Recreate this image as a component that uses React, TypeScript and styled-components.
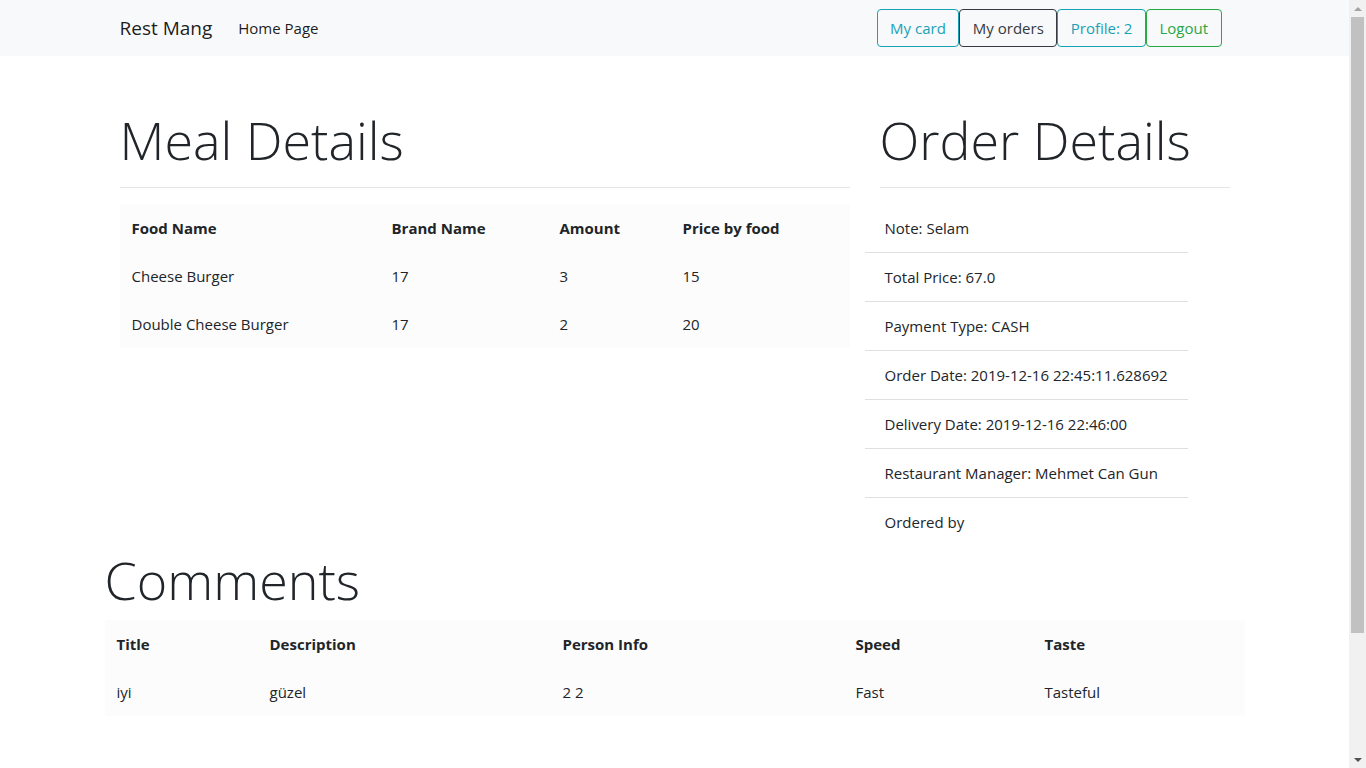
import styled, { createGlobalStyle } from 'styled-components';

const GlobalStyle = createGlobalStyle`
  body {
    margin: 0;
    font-family: "Open Sans", "Noto Sans", "Liberation Sans", sans-serif;
    font-size: 15px;
    line-height: 24px;
    color: #212529;
    background: #fff;
  }
  * {
    box-sizing: border-box;
  }
`;

const Viewport = styled.div`
  display: flex;
  align-items: flex-start;
`;
const Page = styled.div`
  width: 1349px;
  flex: 0 0 1349px;
`;

// the browser's own scrollbar, drawn as in the screenshot
const ScrollBar = styled.div`
  position: sticky;
  top: 0;
  flex: 0 0 17px;
  height: 768px;
  background: #f1f1f1;
  display: flex;
  flex-direction: column;
  align-items: center;
`;
const ScrollArrow = styled.div<{ $down?: boolean }>`
  height: 17px;
  width: 17px;
  display: flex;
  align-items: center;
  justify-content: center;
  &::before {
    content: '';
    border-left: 4px solid transparent;
    border-right: 4px solid transparent;
    ${(p) => (p.$down ? 'border-top: 4px solid #505050;' : 'border-bottom: 4px solid #a3a3a3;')}
  }
`;
const ScrollThumb = styled.div`
  width: 13px;
  height: 616px;
  background: #c1c1c1;
`;
const ScrollSpace = styled.div`
  flex: 1;
`;

const Navbar = styled.nav`
  background-color: #f8f9fa;
  padding: 8px 0;
`;
const Container = styled.div<{ $flush?: boolean }>`
  max-width: 1140px;
  margin: 0 auto;
  padding: 0 ${(p) => (p.$flush ? 0 : 15)}px;
`;
const NavInner = styled.div`
  display: flex;
  align-items: center;
  height: 40px;
`;
const Brand = styled.a`
  font-size: 19px;
  color: rgba(0, 0, 0, 0.9);
  margin-right: 18px;
  text-decoration: none;
`;
const NavLink = styled.a`
  color: rgba(0, 0, 0, 0.9);
  padding: 8px;
  text-decoration: none;
`;
const NavButtons = styled.div`
  margin-left: auto;
  margin-right: 8px;
  display: flex;
`;
const OutlineButton = styled.button<{ $color: string }>`
  font-family: inherit;
  font-size: 15px;
  line-height: 24px;
  padding: 6px 12.5px;
  background: transparent;
  color: ${(p) => p.$color};
  border: 1px solid ${(p) => p.$color};
  border-radius: 4px;
  cursor: pointer;
`;

const Main = styled.div`
  padding-bottom: 190px;
`;
const Row = styled.div`
  display: flex;
  margin: 0 -15px;
  padding-top: 50px;
`;
const Col = styled.div<{ $span: number }>`
  flex: 0 0 ${(p) => (p.$span / 12) * 100}%;
  max-width: ${(p) => (p.$span / 12) * 100}%;
  padding: 0 15px;
`;
const Display = styled.h1`
  font-size: 52px;
  font-weight: 300;
  line-height: 67px;
  margin: 0 0 7px;
`;
const Divider = styled.hr`
  border: 0;
  border-top: 1px solid rgba(0, 0, 0, 0.1);
  margin: 14px 0 16px;
`;
const Table = styled.table`
  width: 100%;
  border-collapse: collapse;
  background: #fcfcfc;
  th,
  td {
    padding: 12px;
    text-align: left;
    vertical-align: top;
    line-height: 24px;
  }
  th {
    font-weight: 700;
  }
`;
const ListGroup = styled.ul`
  list-style: none;
  margin: 0 0 0 -15px;
  padding: 0;
  width: fit-content;
`;
const ListItem = styled.li`
  padding: 12px 20px;
  line-height: 24px;
  border-top: 1px solid rgba(0, 0, 0, 0.125);
  white-space: nowrap;
  &:first-child {
    border-top: 0;
  }
`;

const meals = [
  { food: 'Cheese Burger', brand: '17', amount: '3', price: '15' },
  { food: 'Double Cheese Burger', brand: '17', amount: '2', price: '20' },
];

const orderInfo = [
  'Note: Selam',
  'Total Price: 67.0',
  'Payment Type: CASH',
  'Order Date: 2019-12-16 22:45:11.628692',
  'Delivery Date: 2019-12-16 22:46:00',
  'Restaurant Manager: Mehmet Can Gun',
  'Ordered by',
];

const comments = [{ title: 'iyi', description: 'güzel', person: '2 2', speed: 'Fast', taste: 'Tasteful' }];

export default function App() {
  return (
    <Viewport>
      <GlobalStyle />
      <Page>
        <Navbar>
          <Container>
            <NavInner>
              <Brand href="#">Rest Mang</Brand>
              <NavLink href="#">Home Page</NavLink>
              <NavButtons>
                <OutlineButton $color="#17a2b8">My card</OutlineButton>
                <OutlineButton $color="#343a40">My orders</OutlineButton>
                <OutlineButton $color="#17a2b8">Profile: 2</OutlineButton>
                <OutlineButton $color="#28a745">Logout</OutlineButton>
              </NavButtons>
            </NavInner>
          </Container>
        </Navbar>

        <Main>
          <Container>
            <Row>
              <Col $span={8}>
                <Display>Meal Details</Display>
                <Divider />
                <Table>
                  <colgroup>
                    <col style={{ width: 260 }} />
                    <col style={{ width: 168 }} />
                    <col style={{ width: 123 }} />
                    <col />
                  </colgroup>
                  <thead>
                    <tr>
                      <th>Food Name</th>
                      <th>Brand Name</th>
                      <th>Amount</th>
                      <th>Price by food</th>
                    </tr>
                  </thead>
                  <tbody>
                    {meals.map((m) => (
                      <tr key={m.food}>
                        <td>{m.food}</td>
                        <td>{m.brand}</td>
                        <td>{m.amount}</td>
                        <td>{m.price}</td>
                      </tr>
                    ))}
                  </tbody>
                </Table>
              </Col>
              <Col $span={4}>
                <Display>Order Details</Display>
                <Divider />
                <ListGroup>
                  {orderInfo.map((line) => (
                    <ListItem key={line}>{line}</ListItem>
                  ))}
                </ListGroup>
              </Col>
            </Row>
          </Container>

          <Container $flush>
            <Display>Comments</Display>
            <Table>
              <colgroup>
                <col style={{ width: 153 }} />
                <col style={{ width: 293 }} />
                <col style={{ width: 293 }} />
                <col style={{ width: 189 }} />
                <col />
              </colgroup>
              <thead>
                <tr>
                  <th>Title</th>
                  <th>Description</th>
                  <th>Person Info</th>
                  <th>Speed</th>
                  <th>Taste</th>
                </tr>
              </thead>
              <tbody>
                {comments.map((c) => (
                  <tr key={c.title}>
                    <td>{c.title}</td>
                    <td>{c.description}</td>
                    <td>{c.person}</td>
                    <td>{c.speed}</td>
                    <td>{c.taste}</td>
                  </tr>
                ))}
              </tbody>
            </Table>
          </Container>
        </Main>
      </Page>
      <ScrollBar>
        <ScrollArrow />
        <ScrollThumb />
        <ScrollSpace />
        <ScrollArrow $down />
      </ScrollBar>
    </Viewport>
  );
}
